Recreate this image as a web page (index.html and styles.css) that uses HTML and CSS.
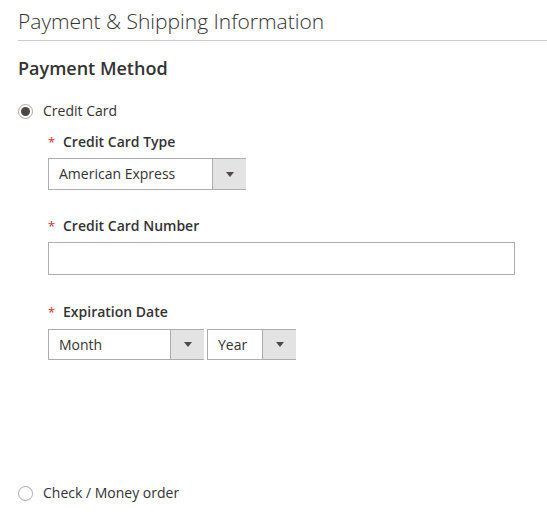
FILE: index.html
```html
<!DOCTYPE html>
<html>
<head>
<meta charset="utf-8">
<link rel="stylesheet" href="styles.css">
</head>
<body>
<div class="page">
  <h1 class="step-title">Payment &amp; Shipping Information</h1>
  <h2 class="method-title">Payment Method</h2>

  <div class="option">
    <span class="radio checked"></span>
    <span class="option-label">Credit Card</span>
  </div>

  <div class="fields">
    <div class="field field-type">
      <div class="label"><span class="req">*</span>Credit Card Type</div>
      <div class="select select-type">
        <span class="select-value">American Express</span>
        <span class="select-arrow"><span class="tri"></span></span>
      </div>
    </div>

    <div class="field field-number">
      <div class="label"><span class="req">*</span>Credit Card Number</div>
      <div class="text-input"></div>
    </div>

    <div class="field field-date">
      <div class="label"><span class="req">*</span>Expiration Date</div>
      <div class="date-row">
        <div class="select select-month">
          <span class="select-value">Month</span>
          <span class="select-arrow"><span class="tri"></span></span>
        </div>
        <div class="select select-year">
          <span class="select-value">Year</span>
          <span class="select-arrow"><span class="tri"></span></span>
        </div>
      </div>
    </div>
  </div>

  <div class="option option-check">
    <span class="radio"></span>
    <span class="option-label">Check / Money order</span>
  </div>
</div>
</body>
</html>
```
FILE: styles.css
```css
html, body {
  margin: 0;
  padding: 0;
  background: #fff;
}
body {
  font-family: "Open Sans", "Liberation Sans", sans-serif;
  color: #333;
  font-size: 14px;
}
.page {
  padding-left: 18px;
}
.step-title {
  margin: 0;
  padding-top: 8px;
  padding-bottom: 6px;
  font-size: 21px;
  line-height: 26px;
  font-weight: 300;
  border-bottom: 1px solid #ccc;
}
.method-title {
  margin: 15px 0 0;
  font-size: 18px;
  line-height: 24px;
  font-weight: 600;
}
.option {
  display: flex;
  align-items: center;
  margin-top: 21px;
  height: 20px;
  line-height: 20px;
}
.radio {
  box-sizing: border-box;
  width: 15px;
  height: 15px;
  border-radius: 50%;
  border: 1px solid #a8a8a8;
  background: #fff;
  position: relative;
  margin-left: 0;
  margin-right: 10px;
  flex: none;
}
.radio.checked::after {
  content: "";
  position: absolute;
  left: 2px;
  top: 2px;
  width: 9px;
  height: 9px;
  border-radius: 50%;
  background: #4d4844;
}
.option-label {
  font-size: 14px;
}
.fields {
  padding-left: 30px;
  margin-top: 11px;
}
.label {
  font-size: 14px;
  line-height: 20px;
  font-weight: 600;
  display: flex;
}
.req {
  color: #e02b27;
  font-weight: 400;
  font-size: 13px;
  width: 15px;
}
.select {
  display: flex;
  box-sizing: border-box;
  height: 32px;
  border: 1px solid #adadad;
  background: #fff;
  margin-top: 6px;
}
.select-value {
  flex: 1;
  padding-left: 10px;
  line-height: 30px;
  font-size: 14px;
}
.select-arrow {
  box-sizing: border-box;
  width: 34px;
  border-left: 1px solid #adadad;
  background: #e3e3e3;
  display: flex;
  align-items: center;
  justify-content: center;
  margin-right: -1px;
}
.tri {
  width: 0;
  height: 0;
  border-left: 4px solid transparent;
  border-right: 4px solid transparent;
  border-top: 5px solid #514943;
  margin-left: 1px;
}
.select-type {
  width: 198px;
}
.field-number {
  margin-top: 26px;
}
.text-input {
  box-sizing: border-box;
  width: 467px;
  height: 33px;
  margin-top: 6px;
  border: 1px solid #adadad;
  background: #fff;
}
.field-date {
  margin-top: 27px;
}
.date-row {
  display: flex;
  gap: 3px;
  margin-top: 7px;
}
.date-row .select {
  margin-top: 0;
  height: 31px;
}
.select-month {
  width: 156px;
}
.select-year {
  width: 89px;
}
.option-check {
  margin-top: 123px;
}
```
